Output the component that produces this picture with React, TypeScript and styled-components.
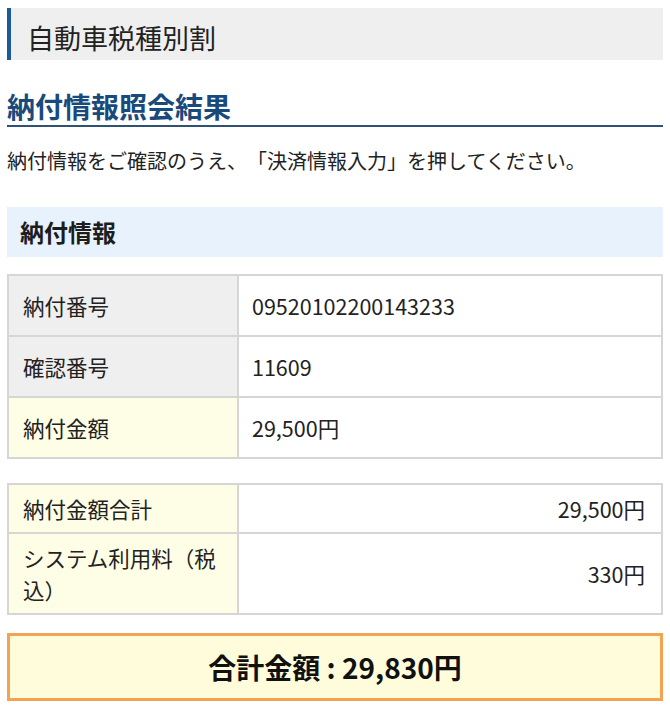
import React from "react";
import styled, { createGlobalStyle } from "styled-components";

const Global = createGlobalStyle`
  html, body { margin: 0; padding: 0; background: #ffffff; }
  body {
    font-family: "Noto Sans CJK JP", "Noto Sans", sans-serif;
    color: #222222;
    text-spacing-trim: space-all;
  }
`;

const Page = styled.div`
  width: 656px;
  padding: 8px 7px 20px;
  display: flex;
  flex-direction: column;
`;

const TitleBar = styled.h1`
  margin: 0;
  height: 52px;
  box-sizing: border-box;
  background: #efefef;
  border-left: 4px solid #1c5a99;
  padding: 10px 0 0 16px;
  font-size: 27px;
  line-height: 40px;
  font-weight: 400;
  color: #222222;
`;

const Heading = styled.h2`
  margin: 28px 0 0;
  padding: 0 0 1px;
  font-size: 28px;
  line-height: 36px;
  font-weight: 700;
  color: #184a7b;
  border-bottom: 2px solid #2f5272;
`;

const Lead = styled.p`
  margin: 19px 0 0;
  font-size: 20px;
  line-height: 30px;
  color: #222222;
`;

const SectionHeader = styled.h3`
  margin: 31px 0 0;
  height: 50px;
  padding-left: 13px;
  font-size: 24px;
  line-height: 50px;
  font-weight: 700;
  background: #e8f2fd;
  color: #1d1d1d;
`;

const Table = styled.table<{ $gap: number }>`
  margin-top: ${(p) => p.$gap}px;
  width: 100%;
  border-collapse: collapse;
  font-size: 21.5px;
  line-height: 32px;
  color: #222222;
`;

const Label = styled.th<{ $tone: "gray" | "yellow"; $pad: number }>`
  width: 200px;
  text-align: left;
  font-weight: 400;
  border: 2px solid #d6d6d6;
  padding: ${(p) => p.$pad}px 14px;
  background: ${(p) => (p.$tone === "gray" ? "#efefef" : "#fefee6")};
  vertical-align: middle;
`;

const Value = styled.td<{ $align: "left" | "right"; $pad: number }>`
  text-align: ${(p) => p.$align};
  border: 2px solid #d6d6d6;
  padding: ${(p) => p.$pad}px ${(p) => (p.$align === "right" ? 16 : 13)}px;
  background: #ffffff;
  vertical-align: middle;
`;

const TotalBox = styled.div`
  margin-top: 18px;
  height: 68px;
  box-sizing: border-box;
  border: 3px solid #f4a352;
  background: #fffcdc;
  display: flex;
  align-items: center;
  justify-content: center;
  font-size: 28px;
  font-weight: 700;
  color: #111111;
  white-space: pre;
`;

const info = [
  { label: "納付番号", value: "09520102200143233", tone: "gray" as const },
  { label: "確認番号", value: "11609", tone: "gray" as const },
  { label: "納付金額", value: "29,500円", tone: "yellow" as const },
];

const sums = [
  { label: "納付金額合計", value: "29,500円" },
  { label: "システム利用料（税込）", value: "330円" },
];

export default function App() {
  return (
    <>
      <Global />
      <Page>
        <TitleBar>自動車税種別割</TitleBar>
        <Heading>納付情報照会結果</Heading>
        <Lead>納付情報をご確認のうえ、「決済情報入力」を押してください。</Lead>
        <SectionHeader>納付情報</SectionHeader>
        <Table $gap={17}>
          <tbody>
            {info.map((r) => (
              <tr key={r.label}>
                <Label $tone={r.tone} $pad={13.5}>{r.label}</Label>
                <Value $align="left" $pad={13.5}>{r.value}</Value>
              </tr>
            ))}
          </tbody>
        </Table>
        <Table $gap={24}>
          <tbody>
            {sums.map((r) => (
              <tr key={r.label}>
                <Label $tone="yellow" $pad={7.5}>{r.label}</Label>
                <Value $align="right" $pad={7.5}>{r.value}</Value>
              </tr>
            ))}
          </tbody>
        </Table>
        <TotalBox>合計金額 : 29,830円</TotalBox>
      </Page>
    </>
  );
}
